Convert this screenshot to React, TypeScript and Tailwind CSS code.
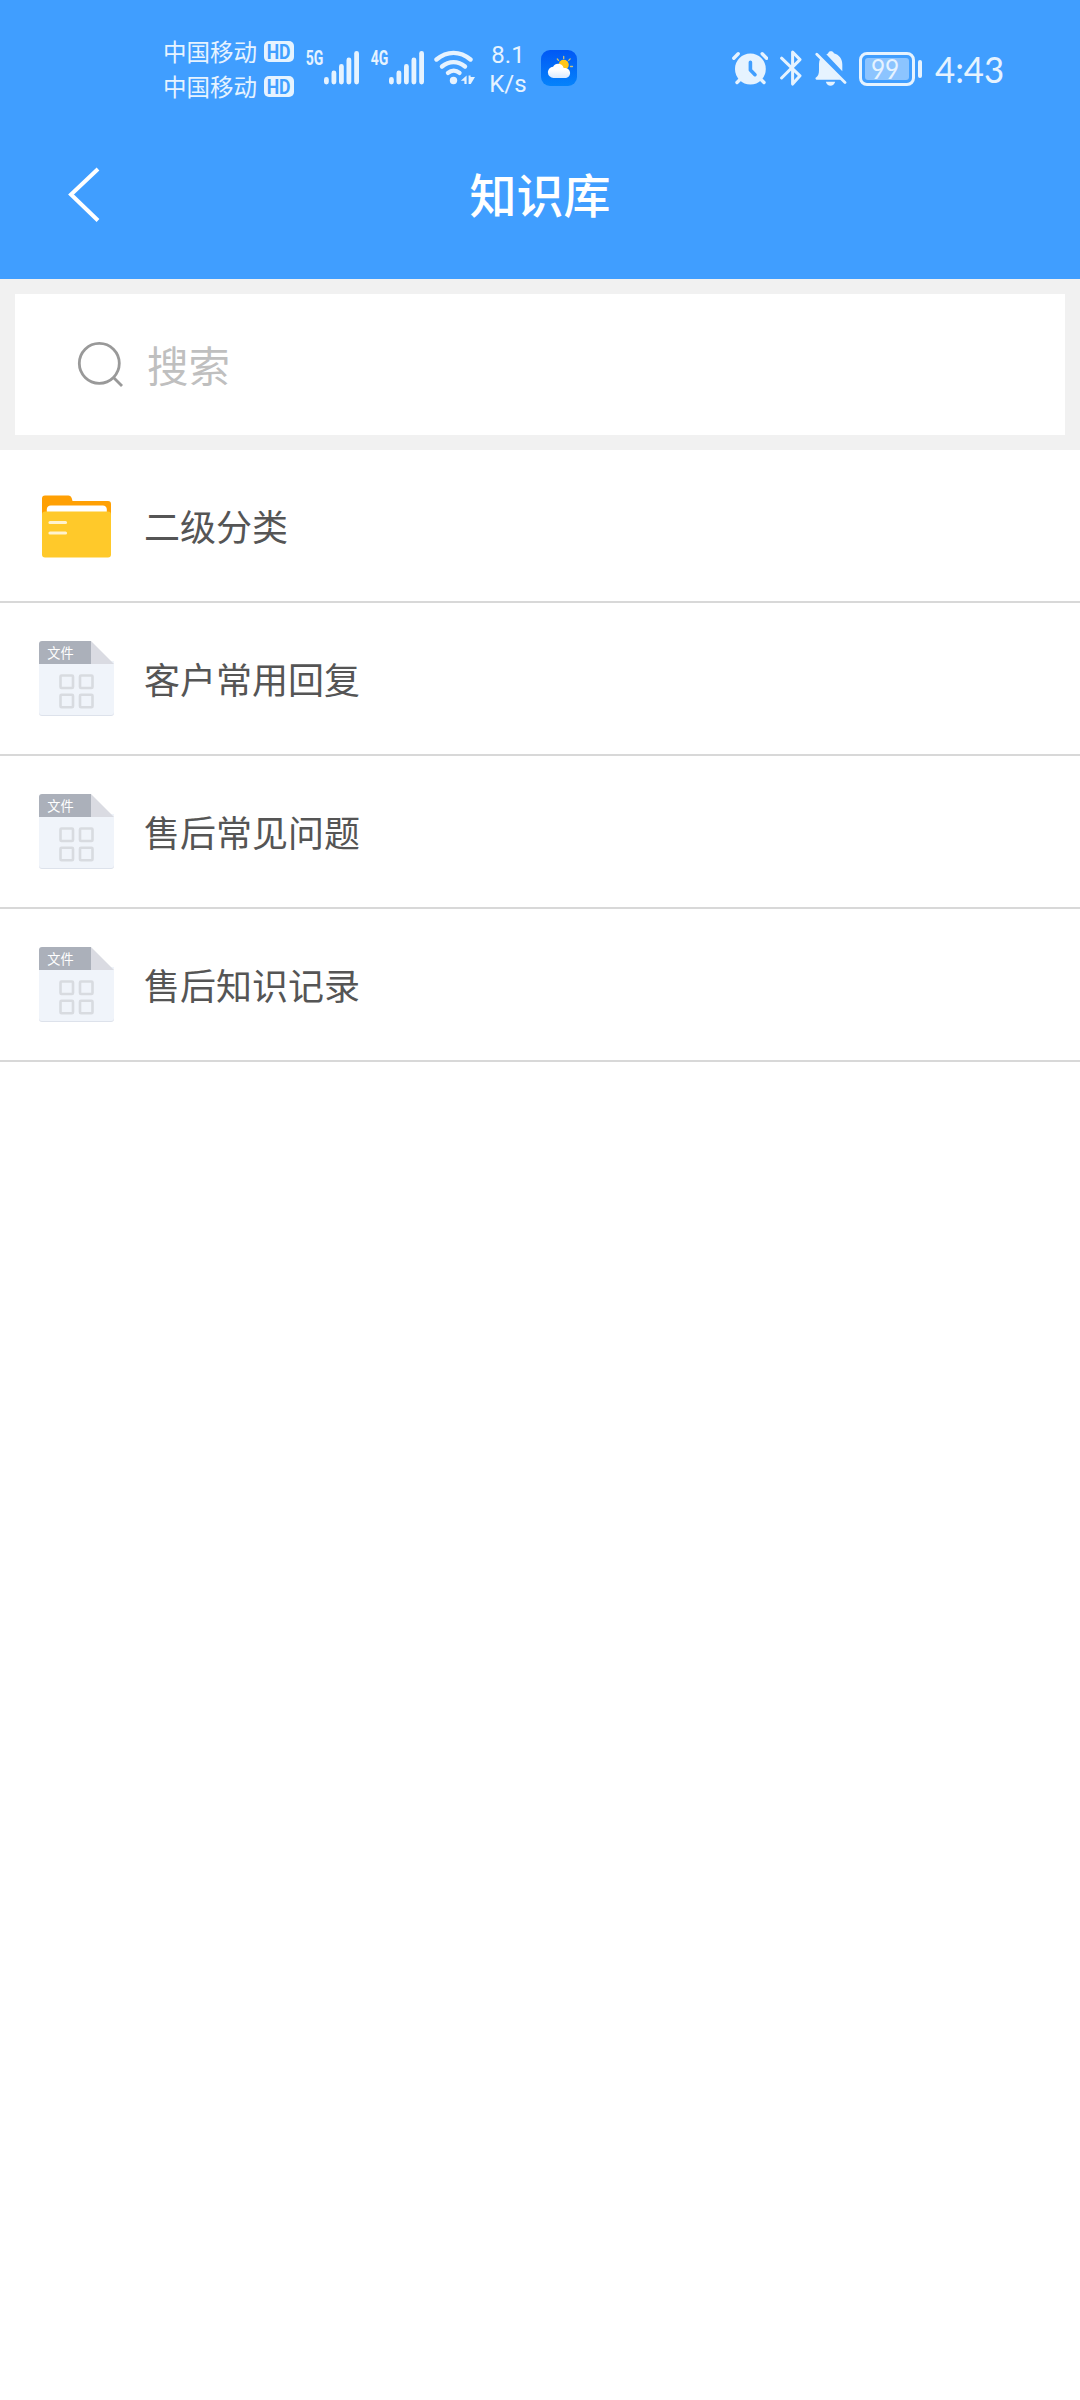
import React from "react";

const INK = "#e6f3ff";

function HdBadge() {
  return (
    <span className="flex h-[21px] w-[30px] items-center justify-center rounded-[5px] bg-[#e6f3ff] font-['Roboto',sans-serif] text-[20px] leading-none font-bold text-[#409eff]">
      <span className="scale-x-[0.88]">HD</span>
    </span>
  );
}

function Carrier() {
  return (
    <div className="flex h-[35px] items-center">
      <span className="w-[101px] text-[23.5px] leading-[35px] whitespace-nowrap">中国移动</span>
      <HdBadge />
    </div>
  );
}

function Signal({ label }: { label: string }) {
  return (
    <div className="flex items-start">
      <span className="flex w-[18px] justify-center font-['Roboto',sans-serif] text-[20px] leading-[15px] font-bold">
        <span className="block scale-x-[0.7]">{label}</span>
      </span>
      <svg width="35" height="34" viewBox="0 0 35 34" fill={INK}>
        <rect x="0" y="26" width="4.8" height="7.5" rx="2.4" />
        <rect x="7.5" y="19.5" width="4.8" height="14" rx="2.4" />
        <rect x="15" y="13" width="4.8" height="20.5" rx="2.4" />
        <rect x="22.5" y="6.5" width="4.8" height="27" rx="2.4" />
        <rect x="30.2" y="0" width="4.8" height="33.5" rx="2.4" />
      </svg>
    </div>
  );
}

function Wifi() {
  return (
    <svg width="42" height="36" viewBox="0 0 42 36" fill="none">
      <g stroke={INK} strokeWidth="4.4" strokeLinecap="round">
        <path d="M2.5 9.5C13 .6 26 .6 36.5 9.5" />
        <path d="M8 16.5c7-5.8 16-5.8 23 0" />
        <path d="M14 22.9c3.5-2.900 8-2.900 11.500 0" />
      </g>
      <circle cx="19.5" cy="30.5" r="3.7" fill={INK} />
      <path d="M32.600 25.500v8.500h-2.200v-3.200h-3.600zM34.600 25.500h2v1.500h4.400l-4.200 7h-2.200z" fill={INK} />
    </svg>
  );
}

function Weather() {
  return (
    <svg width="36" height="36" viewBox="0 0 36 36">
      <defs>
        <linearGradient id="sky" x1="0" y1="0" x2="0" y2="1">
          <stop offset="0" stopColor="#0058f5" />
          <stop offset="1" stopColor="#0583fb" />
        </linearGradient>
        <linearGradient id="cloud" x1="0" y1="0" x2="0" y2="1">
          <stop offset="0.4" stopColor="#fff" />
          <stop offset="1" stopColor="#d9eaff" />
        </linearGradient>
      </defs>
      <rect width="36" height="36" rx="9" fill="url(#sky)" />
      <g stroke="#c9c27c" strokeWidth="1.3" strokeLinecap="round">
        <path d="M22.700 6.500v2M16.300 9l1.200 1.400M29.200 8.900l-1.500 1.500M29.500 16.500h2" />
      </g>
      <circle cx="22.700" cy="14.800" r="5.100" fill="#ffc61a" />
      <path d="M12.500 28a5.700 5.700 0 0 1-5.600-5.500c0-3 2.200-5.600 5.200-5.800 1-1.900 2.700-2.900 4.900-2.900 2.700 0 4.800 1.500 5.700 4.100 3.500-.2 6.400 1.700 6.400 5 0 3.100-2.400 5.100-5.300 5.100z" fill="url(#cloud)" />
    </svg>
  );
}

function Alarm() {
  return (
    <svg width="36" height="36" viewBox="0 0 36 36" fill="none">
      <circle cx="18.4" cy="19" r="15.4" fill={INK} />
      <path d="M1.8 8.200 6.200 3.700M34.600 8.200l-4.400-4.500M5 32.500l5-5M32 32.500l-5-5" stroke={INK} strokeWidth="3.400" strokeLinecap="round" />
      <path d="M18.400 12.200v7.800l4.600 4.700" stroke="#409eff" strokeWidth="3.600" strokeLinecap="round" strokeLinejoin="round" />
    </svg>
  );
}

function Bluetooth() {
  return (
    <svg width="22" height="36" viewBox="0 0 22 36" fill="none">
      <path d="M1.600 8.200 20 25.800l-7.400 8.300V2L20 9.600 1.600 28" stroke={INK} strokeWidth="3" strokeLinecap="round" strokeLinejoin="round" />
    </svg>
  );
}

function BellOff() {
  return (
    <svg width="33" height="36" viewBox="0 0 33 36" fill="none">
      <path d="M11.300 4.300c1.200-.4 1.700-.8 2.100-1.600.5-.9 1.300-1.400 2.600-1.400s2.300.6 2.900 2c5.200 1.500 8.400 5.700 8.400 11v7z" fill={INK} />
      <path d="M5.200 8.500 26 29.700H1.500a1.300 1.300 0 0 1-.2-2.500C3.300 26 4 23.500 4 20v-6c0-2 .4-3.800 1.200-5.500z" fill={INK} />
      <path d="M10.800 31.800h9.400c-.9 2.600-2.400 3.900-4.700 3.900s-3.800-1.300-4.700-3.900z" fill={INK} />
      <path d="M1.800 4.300 30 32.600" stroke={INK} strokeWidth="2.800" strokeLinecap="round" />
    </svg>
  );
}

function Battery() {
  return (
    <div className="flex items-center gap-[3px]">
      <div className="h-[34px] w-[56px] rounded-[8px] border-3 border-[#e6f3ff] p-[3px]">
        <div className="flex h-full w-full items-center justify-center rounded-[3px] bg-[#8cc4ff] pr-[3px] font-['Lato',sans-serif] text-[26px] leading-none">
          <span className="block scale-x-[0.94]">99</span>
        </div>
      </div>
      <div className="h-[18px] w-[4px] rounded-[2px] bg-[#e6f3ff]" />
    </div>
  );
}

function StatusBar() {
  return (
    <div className="flex h-[135px] items-start pl-[163px] text-[#e6f3ff]">
      <div className="mt-[34px] w-[131px]">
        <Carrier />
        <Carrier />
      </div>
      <div className="mt-[51px] ml-[12px]">
        <Signal label="5G" />
      </div>
      <div className="mt-[51px] ml-[12px]">
        <Signal label="4G" />
      </div>
      <div className="mt-[50px] ml-[10px]">
        <Wifi />
      </div>
      <div className="mt-[41px] ml-[11px] w-[42px] text-center font-['Roboto',sans-serif] text-[24px] leading-[28.500px]">
        <div>8.1</div>
        <div>K/s</div>
      </div>
      <div className="mt-[50px] ml-[12px]">
        <Weather />
      </div>
      <div className="mt-[50px] ml-[155px]">
        <Alarm />
      </div>
      <div className="mt-[50px] ml-[12px]">
        <Bluetooth />
      </div>
      <div className="mt-[50px] ml-[13px]">
        <BellOff />
      </div>
      <div className="mt-[52px] ml-[11px]">
        <Battery />
      </div>
      <div className="mt-[49px] ml-[13px] origin-left scale-x-[0.94] font-['Lato',sans-serif] text-[37px] leading-[40px]">4:43</div>
    </div>
  );
}

function FolderIcon() {
  return (
    <svg width="75" height="75" viewBox="0 0 75 75">
      <path d="M3 26V10.500a3 3 0 0 1 3-3h23.500c2.500 0 3.500 2.800 4 5.500H69a3 3 0 0 1 3 3v12H3z" fill="#ffa004" />
      <path d="M7.800 27v-6a4 4 0 0 1 4-3.500h52a4 4 0 0 1 4 3.500v6z" fill="#fff" />
      <rect x="3" y="23.500" width="69" height="46" rx="3" fill="#ffc92a" />
      <path d="M11 34.500h15.500M11 45h15.500" stroke="#fff3d0" strokeWidth="3.200" strokeLinecap="round" />
    </svg>
  );
}

function FileIcon() {
  return (
    <svg width="75" height="75" viewBox="0 0 75 75">
      <path d="M0 20h75v52a3 3 0 0 1-3 3H3a3 3 0 0 1-3-3z" fill="#dde2eb" />
      <path d="M0 20h75v51a3 3 0 0 1-3 3H3a3 3 0 0 1-3-3z" fill="#f0f4fa" />
      <path d="M0 23V3a3 3 0 0 1 3-3h49v23z" fill="#abb0ba" />
      <path d="M52 0l23 23H52z" fill="#dadbe2" />
      <g fill="none" stroke="#d8dbe0" strokeWidth="2.600">
        <rect x="21.500" y="34.500" width="12.500" height="12.500" rx="1" />
        <rect x="41" y="34.500" width="12.500" height="12.500" rx="1" />
        <rect x="21.500" y="53.800" width="12.500" height="12.500" rx="1" />
        <rect x="41" y="53.800" width="12.500" height="12.500" rx="1" />
      </g>
      <text x="8.300" y="17" fontSize="13.200" fill="#fff">文件</text>
    </svg>
  );
}

const items = [
  { title: "二级分类", folder: true },
  { title: "客户常用回复", folder: false },
  { title: "售后常见问题", folder: false },
  { title: "售后知识记录", folder: false },
];

export default function App() {
  return (
    <div className="min-h-[2400px] w-[1080px] bg-white font-['Noto_Sans_CJK_SC',sans-serif]">
      <header className="h-[279px] bg-[#409eff]">
        <StatusBar />
        <div className="flex h-[120px] items-center">
          <button className="ml-[67px] w-[100px]" aria-label="返回">
            <svg width="36" height="56" viewBox="0 0 36 56" fill="none">
              <path d="M31 2 4 27.500 31 53.500" stroke="#fff" strokeWidth="4" />
            </svg>
          </button>
          <h1 className="flex-1 pr-[167px] pb-[4px] text-center text-[47px] leading-[60px] font-medium text-white">知识库</h1>
        </div>
      </header>
      <div className="h-[171px] bg-[#f1f1f1] p-[15px]">
        <div className="flex h-[141px] items-center bg-white pb-[2px] pl-[62px]">
          <svg width="46" height="46" viewBox="0 0 46 46" fill="none" stroke="#999" strokeWidth="2.800">
            <circle cx="22.300" cy="22.300" r="20" />
            <path d="M36.500 36.500 45 45" />
          </svg>
          <span className="ml-[24px] text-[41.500px] leading-[60px] text-[#bfbfbf]">搜索</span>
        </div>
      </div>
      <ul>
        {items.map((item) => (
          <li key={item.title} className="flex h-[153px] items-center border-b-2 border-[#d8d8d8] pl-[39px]">
            {item.folder ? <FolderIcon /> : <FileIcon />}
            <span className="ml-[30px] pb-[2px] text-[36px] leading-[54px] text-[#555]">{item.title}</span>
          </li>
        ))}
      </ul>
    </div>
  );
}
